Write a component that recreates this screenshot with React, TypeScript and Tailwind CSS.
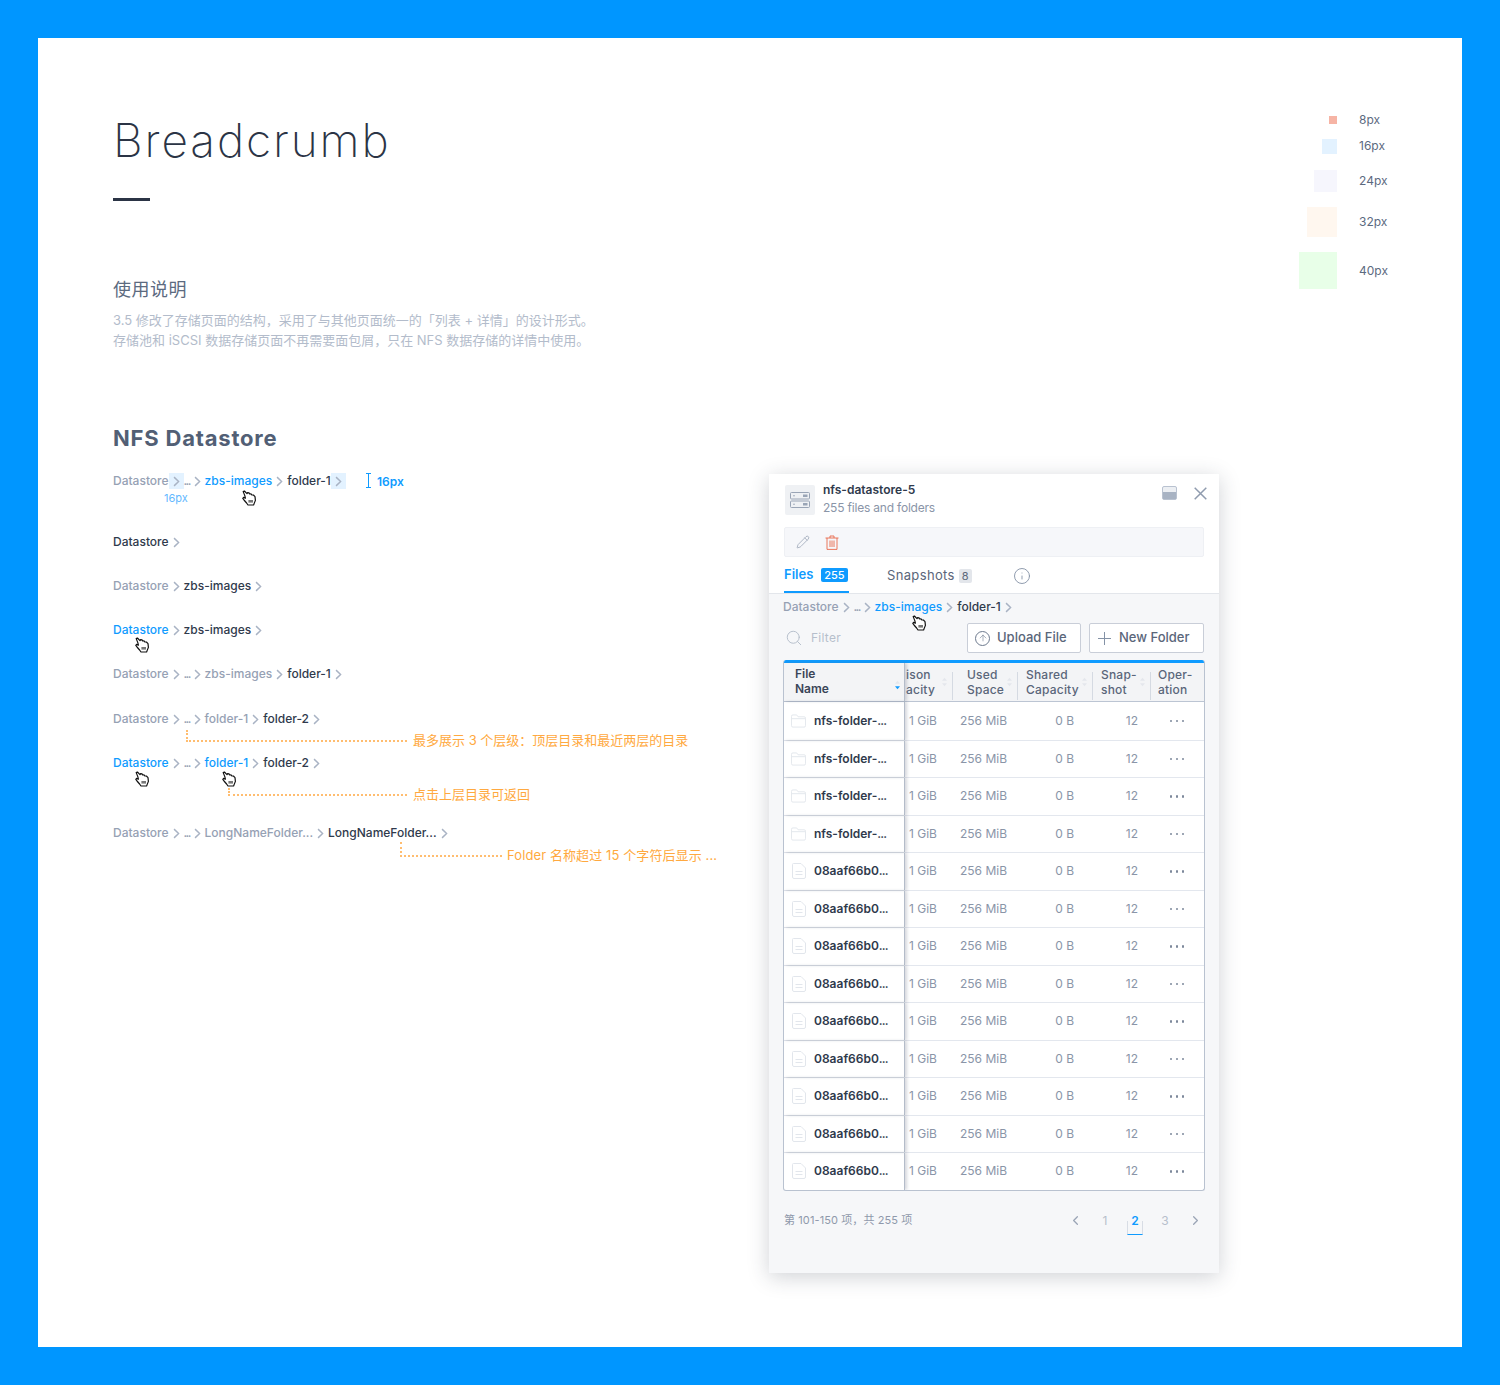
import React from "react";
import { ChevronLeft, ChevronRight, Info, Pencil, Search, ArrowUp } from "lucide-react";

const font = { fontFamily: 'Inter, "Noto Sans CJK SC", sans-serif' };

function Cursor({ className }: { className: string }) {
  return (
    <svg viewBox="0 0 16 16" className={`absolute h-[16px] w-[16px] ${className}`}>
      <path
        d="M2.2 1.6 L3.4 1 L6 3.6 L6.6 2.6 L8 2.8 L8.6 4 L10 3.8 L10.8 5 L12.4 5 L14 6.6 L14.4 10.4 L13.2 13.4 L12.6 15 L7 15 L5.6 13 L3 10 L1.8 8.4 L2.6 7.4 L4.4 8.2 L3.8 5.6 Z"
        fill="#fff"
        stroke="#111"
        strokeWidth="1.2"
        strokeLinejoin="round"
      />
      <rect x="7.4" y="10" width="4.6" height="2.6" fill="#777" />
    </svg>
  );
}

function Chev({ hl }: { hl?: boolean }) {
  return (
    <span className={`flex h-4 w-[15px] shrink-0 items-center justify-center ${hl ? "bg-[#e3f2ff]" : ""}`}>
      <svg viewBox="0 0 8 12" className="h-[11px] w-[7px]" fill="none" stroke="#a9b3c4" strokeWidth="1.6">
        <path d="M1.2 1 L6.4 6 L1.2 11" />
      </svg>
    </span>
  );
}

type Part = { t: string; c?: "g" | "d" | "b"; hl?: boolean };

function Crumb({ parts, className = "", children }: { parts: Part[]; className?: string; children?: React.ReactNode }) {
  return (
    <div className={`relative flex h-5 items-center text-[12px] font-medium whitespace-nowrap ${className}`}>
      {parts.map((p, i) => (
        <React.Fragment key={i}>
          <span
            className={`${p.t === "..." ? "w-[6px] tracking-[-1.6px]" : ""} ${
              p.c === "b" ? "text-[#0f9bff]" : p.c === "d" ? "text-[#2f3a4c]" : "text-[#96a1b4]"
            }`}
          >
            {p.t}
          </span>
          <Chev hl={p.hl} />
        </React.Fragment>
      ))}
      {children}
    </div>
  );
}

function Note({ text, textClass, lineClass }: { text: string; textClass: string; lineClass: string }) {
  return (
    <>
      <span className={`absolute border-b-2 border-l-2 border-dotted border-[#ffbd70] ${lineClass}`} />
      <span className={`absolute text-[13px] leading-5 font-normal text-[#ffa940] ${textClass}`}>{text}</span>
    </>
  );
}

function Sort({ active }: { active?: boolean }) {
  return (
    <svg viewBox="0 0 8 12" className="h-[10px] w-[7px]">
      <path d="M4 1 L7 4.4 H1 Z" fill="#e4e7ec" />
      <path d="M4 11 L7 7.6 H1 Z" fill={active ? "#0f9bff" : "#e4e7ec"} />
    </svg>
  );
}

function FolderIcon() {
  return (
    <svg viewBox="0 0 16 14" className="h-[14px] w-[16px]" fill="none" stroke="#e2e6ec" strokeWidth="1">
      <path d="M.5 2 Q.5 .5 2 .5 H6 L7.5 2.5 H14 Q15.5 2.5 15.5 4 V12 Q15.5 13.5 14 13.5 H2 Q.5 13.5 .5 12 Z" />
      <path d="M.5 4.5 H15.5" />
    </svg>
  );
}

function FileIcon() {
  return (
    <svg viewBox="0 0 14 16" className="h-[16px] w-[14px]" fill="none" stroke="#e2e6ec" strokeWidth="1">
      <path d="M1.5.5 H9 L13.5 5 V14 Q13.5 15.5 12 15.5 H2 Q.5 15.5 .5 14 V1.5 Q.5 .5 1.5 .5 Z" />
      <path d="M3.5 8.5 H10.5 M3.5 11.5 H10.5" />
    </svg>
  );
}

const rows = [
  ...Array(4).fill(["nfs-folder-", true]),
  ...Array(9).fill(["08aaf66b0", false]),
] as [string, boolean][];

const grid = "grid grid-cols-[121px_47px_65px_75px_58px_54px]";

function Head({ a, b, sort = true, className = "", sortClass = "top-[10px]" }: { a: string; b: string; sort?: boolean; className?: string; sortClass?: string }) {
  return (
    <div className={`relative text-[12px] leading-[15px] font-medium tracking-[0.2px] text-[#5a667a] ${className}`}>
      <div>
        {a}
        <br />
        {b}
      </div>
      {sort && (
        <span className={`absolute right-[4px] ${sortClass}`}>
          <Sort />
        </span>
      )}
    </div>
  );
}

const sep = "mt-[9px] mb-[1px] border-l border-[#d5dae2]";

function Table() {
  return (
    <div className="mx-[14px] mt-[7px] overflow-hidden rounded-[3px] border-x border-b border-[#b9c2d0] bg-white">
      <div className="h-[3px] bg-[#0f9bff]" />
      <div className={`${grid} h-[39px] border-b border-[#bcc5d3] bg-[#f3f4f6]`}>
        <div className="relative flex items-center border-r border-[#b4bcc9] pb-[2px] pl-[11px] text-[12px] leading-[15px] font-semibold text-[#3a4558] shadow-[2px_0_3px_rgba(90,100,120,0.25)]">
          <div>
            File
            <br />
            Name
          </div>
          <span className="absolute top-[17px] right-[3px]">
            <Sort active />
          </span>
        </div>
        <Head a="ison" b="acity" className="pt-[4px] pl-[1px]" sortClass="top-[14px]" />
        <div className={`${sep} pl-[14px]`}>
          <Head a="Used" b="Space" className="-mt-[5px]" />
        </div>
        <div className={`${sep} pl-[8px]`}>
          <Head a="Shared" b="Capacity" className="-mt-[5px]" />
        </div>
        <div className={`${sep} pl-[8px]`}>
          <Head a="Snap-" b="shot" className="-mt-[5px]" />
        </div>
        <div className={`${sep} pl-[7px]`}>
          <Head a="Oper-" b="ation" sort={false} className="-mt-[5px]" />
        </div>
      </div>
      {rows.map(([name, folder], i) => (
        <div key={i} className={`${grid} h-[37.5px] items-stretch text-[12px] text-[#8a95a8] ${i ? "border-t border-[#e3e7ee]" : ""}`}>
          <div className="flex items-center gap-[8px] border-r border-[#b4bcc9] pl-[7px] font-semibold text-[#2f3a4c] shadow-[2px_0_3px_rgba(90,100,120,0.25)]">
            <span className="flex w-[15px] justify-center">{folder ? <FolderIcon /> : <FileIcon />}</span>
            <span>
              {name}
              <span className="tracking-[-0.8px]">...</span>
            </span>
          </div>
          <div className="flex items-center pl-[4px]">1 GiB</div>
          <div className="flex items-center pl-[8px]">256 MiB</div>
          <div className="flex items-center justify-end pr-[18px]">0 B</div>
          <div className="flex items-center justify-end pr-[12px]">12</div>
          <div className="flex items-center justify-center gap-[3.5px]">
            <span className="h-[2.5px] w-[2.5px] rounded-full bg-[#7d889b]" />
            <span className="h-[2.5px] w-[2.5px] rounded-full bg-[#7d889b]" />
            <span className="h-[2.5px] w-[2.5px] rounded-full bg-[#7d889b]" />
          </div>
        </div>
      ))}
    </div>
  );
}

function Panel() {
  return (
    <div className="relative mt-[51px] h-[799px] w-[450px] bg-[#f6f7f9] shadow-[0_4px_20px_rgba(40,50,70,0.22)]">
      <div className="border-b border-[#e3e6eb] bg-white">
        <div className="relative flex items-center pt-[8px] pl-[16px]">
          <span className="flex h-[30px] w-[30px] items-center justify-center rounded-[2px] bg-[#eff1f4]">
            <svg viewBox="0 0 20 16" className="h-[16px] w-[20px]" fill="none" stroke="#9aa5b6" strokeWidth="1">
              <rect x=".5" y=".5" width="19" height="6.5" rx="1" />
              <rect x=".5" y="9" width="19" height="6.5" rx="1" />
              <rect x="13" y="2.5" width="4.5" height="2.5" fill="#9aa5b6" stroke="none" />
              <rect x="13" y="11" width="4.5" height="2.5" fill="#9aa5b6" stroke="none" />
              <circle cx="4" cy="3.7" r=".8" fill="#9aa5b6" stroke="none" />
              <circle cx="4" cy="12.2" r=".8" fill="#9aa5b6" stroke="none" />
            </svg>
          </span>
          <div className="ml-[8px] leading-[18px]">
            <div className="-mt-[1px] text-[12px] font-semibold text-[#2f3a4c]">nfs-datastore-5</div>
            <div className="text-[12px] tracking-[-0.2px] text-[#8a95a8]">255 files and folders</div>
          </div>
          <div className="mt-[4px] ml-auto flex items-center gap-[17px] self-start pr-[12px]">
            <span className="flex h-[14px] w-[15px] items-end rounded-[2px] border border-[#b9c2d0] bg-[#eceff3]">
              <span className="h-[7px] w-full bg-[#a8b3c3]" />
            </span>
            <svg viewBox="0 0 13 13" className="h-[13px] w-[13px]" stroke="#8f9bae" strokeWidth="1.5">
              <path d="M.7.7 L12.3 12.3 M12.3.7 L.7 12.3" />
            </svg>
          </div>
        </div>
        <div className="mx-[15px] mt-[10px] flex h-[30px] items-center gap-[15px] rounded-[2px] border border-[#eef0f4] bg-[#f6f7fa] pl-[11px]">
          <Pencil size={14} strokeWidth={1.2} color="#8f9bae" />
          <svg viewBox="0 0 14 15" className="h-[15px] w-[14px]" fill="none" stroke="#e8664a" strokeWidth="0.9">
            <path d="M.5 3 H13.5 M5 3 V1 H9 V3 M2 3 V14.4 H12 V3 M5 5.5 V12 M7 5.5 V12 M9 5.5 V12" />
          </svg>
        </div>
        <div className="flex h-[36px] items-stretch pl-[15px] text-[13px]">
          <div className="flex h-[36px] w-[65px] items-center gap-[8px] border-b-2 border-[#0f9bff] pt-[2px] font-semibold text-[#0f9bff]">
            Files
            <span className="rounded-[2px] bg-[#0f9bff] px-[3px] text-[11px] leading-[14px] font-medium text-white">255</span>
          </div>
          <div className="ml-[38px] flex items-center gap-[4px] pt-[1px] tracking-[0.35px] text-[#5a667a]">
            Snapshots
            <span className="rounded-[2px] bg-[#e3e6eb] px-[3px] text-[11px] leading-[14px] tracking-normal text-[#5a667a]">8</span>
          </div>
          <div className="ml-[41px] flex items-center pt-[1px]">
            <Info size={18} strokeWidth={1.2} color="#8492a6" />
          </div>
        </div>
      </div>
      <Crumb
        className="mt-[3px] ml-[14px]"
        parts={[{ t: "Datastore" }, { t: "..." }, { t: "zbs-images", c: "b" }, { t: "folder-1", c: "d" }]}
      >
        <Cursor className="top-[18px] left-[128px]" />
      </Crumb>
      <div className="mt-[6px] flex h-[30px] items-center pr-[15px] pl-[16px] text-[13px]">
        <Search size={18} strokeWidth={1.3} color="#b6bfcc" />
        <span className="ml-[8px] text-[12px] tracking-[0.25px] text-[#b6bfcc]">Filter</span>
        <button className="ml-auto flex h-[30px] w-[114px] items-center rounded-[2px] border border-[#c9ced8] bg-white pl-[7px] font-medium whitespace-nowrap text-[#5a667a]">
          <span className="mr-[7px] flex h-[15px] w-[15px] items-center justify-center rounded-full border border-[#6d7a8e]">
            <ArrowUp size={10} strokeWidth={1.4} color="#6d7a8e" />
          </span>
          Upload File
        </button>
        <button className="ml-[8px] flex h-[30px] w-[115px] items-center rounded-[2px] border border-[#c9ced8] bg-white pl-[8px] font-medium whitespace-nowrap text-[#5a667a]">
          <svg viewBox="0 0 13 13" className="mr-[8px] h-[13px] w-[13px]" stroke="#8492a6" strokeWidth="1">
            <path d="M6.5 0 V13 M0 6.5 H13" />
          </svg>
          New Folder
        </button>
      </div>
      <Table />
      <div className="mt-[20px] flex h-[20px] items-center pr-[9px] pl-[15px] text-[11px] tracking-[0.1px] text-[#8f99ab]">
        <span>第 101-150 项，共 255 项</span>
        <div className="ml-auto flex items-center text-[12px]">
          <span className="flex w-[30px] justify-center"><ChevronLeft size={15} color="#9aa5b6" /></span>
          <span className="flex w-[30px] justify-center text-[#b6bfcc]">1</span>
          <span className="relative flex h-[28px] w-[30px] items-center justify-center font-semibold text-[#0f9bff]">
            2<span className="absolute bottom-0 left-[7px] h-[14px] w-[16px] border-x border-b border-x-[#d8dde5] border-b-[#0f9bff]" />
          </span>
          <span className="flex w-[30px] justify-center text-[#b6bfcc]">3</span>
          <span className="flex w-[30px] justify-center"><ChevronRight size={15} color="#9aa5b6" /></span>
        </div>
      </div>
    </div>
  );
}

const legend = [
  { s: "h-[8px] w-[8px] bg-[#f6b4a5]", h: "h-[16px]", mt: "mt-[73px]", l: "8px" },
  { s: "h-[15px] w-[15px] bg-[#e3f2ff]", h: "h-[16px]", mt: "mt-[10px]", l: "16px" },
  { s: "h-[22px] w-[23px] bg-[#f6f6fd]", h: "h-[22px]", mt: "mt-[16px]", l: "24px" },
  { s: "h-[30px] w-[30px] bg-[#fff7ef]", h: "h-[30px]", mt: "mt-[15px]", l: "32px" },
  { s: "h-[37px] w-[38px] bg-[#e8ffe8]", h: "h-[37px]", mt: "mt-[15px]", l: "40px" },
];

export default function App() {
  return (
    <div className="h-[1385px] w-[1500px] bg-[#0096ff] p-[38px] text-[#2f3a4c]" style={font}>
      <div className="h-[1309px] bg-white pl-[75px]">
        <div className="flex h-[385px] justify-between pr-[75px]">
          <div>
            <h1 className="mt-[72px] text-[46px] leading-[60px] font-extralight tracking-[1.9px] text-[#2b3445]">Breadcrumb</h1>
            <div className="mt-[28px] h-[3px] w-[37px] bg-[#2b3445]" />
            <h2 className="mt-[76px] text-[18px] leading-[26px] font-normal tracking-[0.5px] text-[#5c6a7f]">使用说明</h2>
            <p className="mt-[7px] text-[13px] leading-[20px] text-[#b3bccb]">
              3.5 修改了存储页面的结构，采用了与其他页面统一的「列表 + 详情」的设计形式。
              <br />
              存储池和 iSCSI 数据存储页面不再需要面包屑，只在 NFS 数据存储的详情中使用。
            </p>
          </div>
          <div className="flex flex-col pt-[1px]">
            {legend.map((r) => (
              <div key={r.l} className={`flex items-center ${r.h} ${r.mt}`}>
                <span className="flex w-[38px] justify-end">
                  <span className={`block ${r.s}`} />
                </span>
                <span className="ml-[22px] w-[28px] text-[12px] text-[#5c6a7f]">{r.l}</span>
              </div>
            ))}
          </div>
        </div>
        <div className="flex">
          <div className="w-[656px] pt-0">
            <h2 className="h-[30px] text-[22px] leading-[30px] font-bold tracking-[0.8px] text-[#525f75]">NFS Datastore</h2>
            <Crumb
              className="mt-[18px]"
              parts={[
                { t: "Datastore", hl: true },
                { t: "..." },
                { t: "zbs-images", c: "b" },
                { t: "folder-1", c: "d", hl: true },
              ]}
            >
              <span className="absolute top-[19px] left-[51px] text-[11px] leading-4 font-normal text-[#64b9ff]">16px</span>
              <Cursor className="top-[19px] left-[128px]" />
              <span className="absolute top-[2px] left-[253px] h-[15px] w-[5px] border-y border-[#0f9bff]">
                <span className="mx-auto block h-full w-px bg-[#0f9bff]" />
              </span>
              <span className="absolute top-[2px] left-[264px] font-semibold text-[#0f9bff]">16px</span>
            </Crumb>
            <Crumb className="mt-[41px]" parts={[{ t: "Datastore", c: "d" }]} />
            <Crumb className="mt-[24px]" parts={[{ t: "Datastore" }, { t: "zbs-images", c: "d" }]} />
            <Crumb className="mt-[24px]" parts={[{ t: "Datastore", c: "b" }, { t: "zbs-images", c: "d" }]}>
              <Cursor className="top-[17px] left-[21px]" />
            </Crumb>
            <Crumb className="mt-[24px]" parts={[{ t: "Datastore" }, { t: "..." }, { t: "zbs-images" }, { t: "folder-1", c: "d" }]} />
            <Crumb className="mt-[25px]" parts={[{ t: "Datastore" }, { t: "..." }, { t: "folder-1" }, { t: "folder-2", c: "d" }]}>
              <Note lineClass="top-[21px] left-[73px] h-[12px] w-[221px]" textClass="top-[21px] left-[300px]" text="最多展示 3 个层级：顶层目录和最近两层的目录" />
            </Crumb>
            <Crumb className="mt-[24px]" parts={[{ t: "Datastore", c: "b" }, { t: "..." }, { t: "folder-1", c: "b" }, { t: "folder-2", c: "d" }]}>
              <Cursor className="top-[18px] left-[21px]" />
              <Cursor className="top-[18px] left-[108px]" />
              <Note lineClass="top-[35px] left-[115px] h-[8px] w-[179px]" textClass="top-[31px] left-[300px]" text="点击上层目录可返回" />
            </Crumb>
            <Crumb className="mt-[50px]" parts={[{ t: "Datastore" }, { t: "..." }, { t: "LongNameFolder..." }, { t: "LongNameFolder...", c: "d" }]}>
              <Note lineClass="top-[19px] left-[287px] h-[15px] w-[102px]" textClass="top-[22px] left-[394px] tracking-[0.1px]" text="Folder 名称超过 15 个字符后显示 ..." />
            </Crumb>
          </div>
          <Panel />
        </div>
      </div>
    </div>
  );
}
